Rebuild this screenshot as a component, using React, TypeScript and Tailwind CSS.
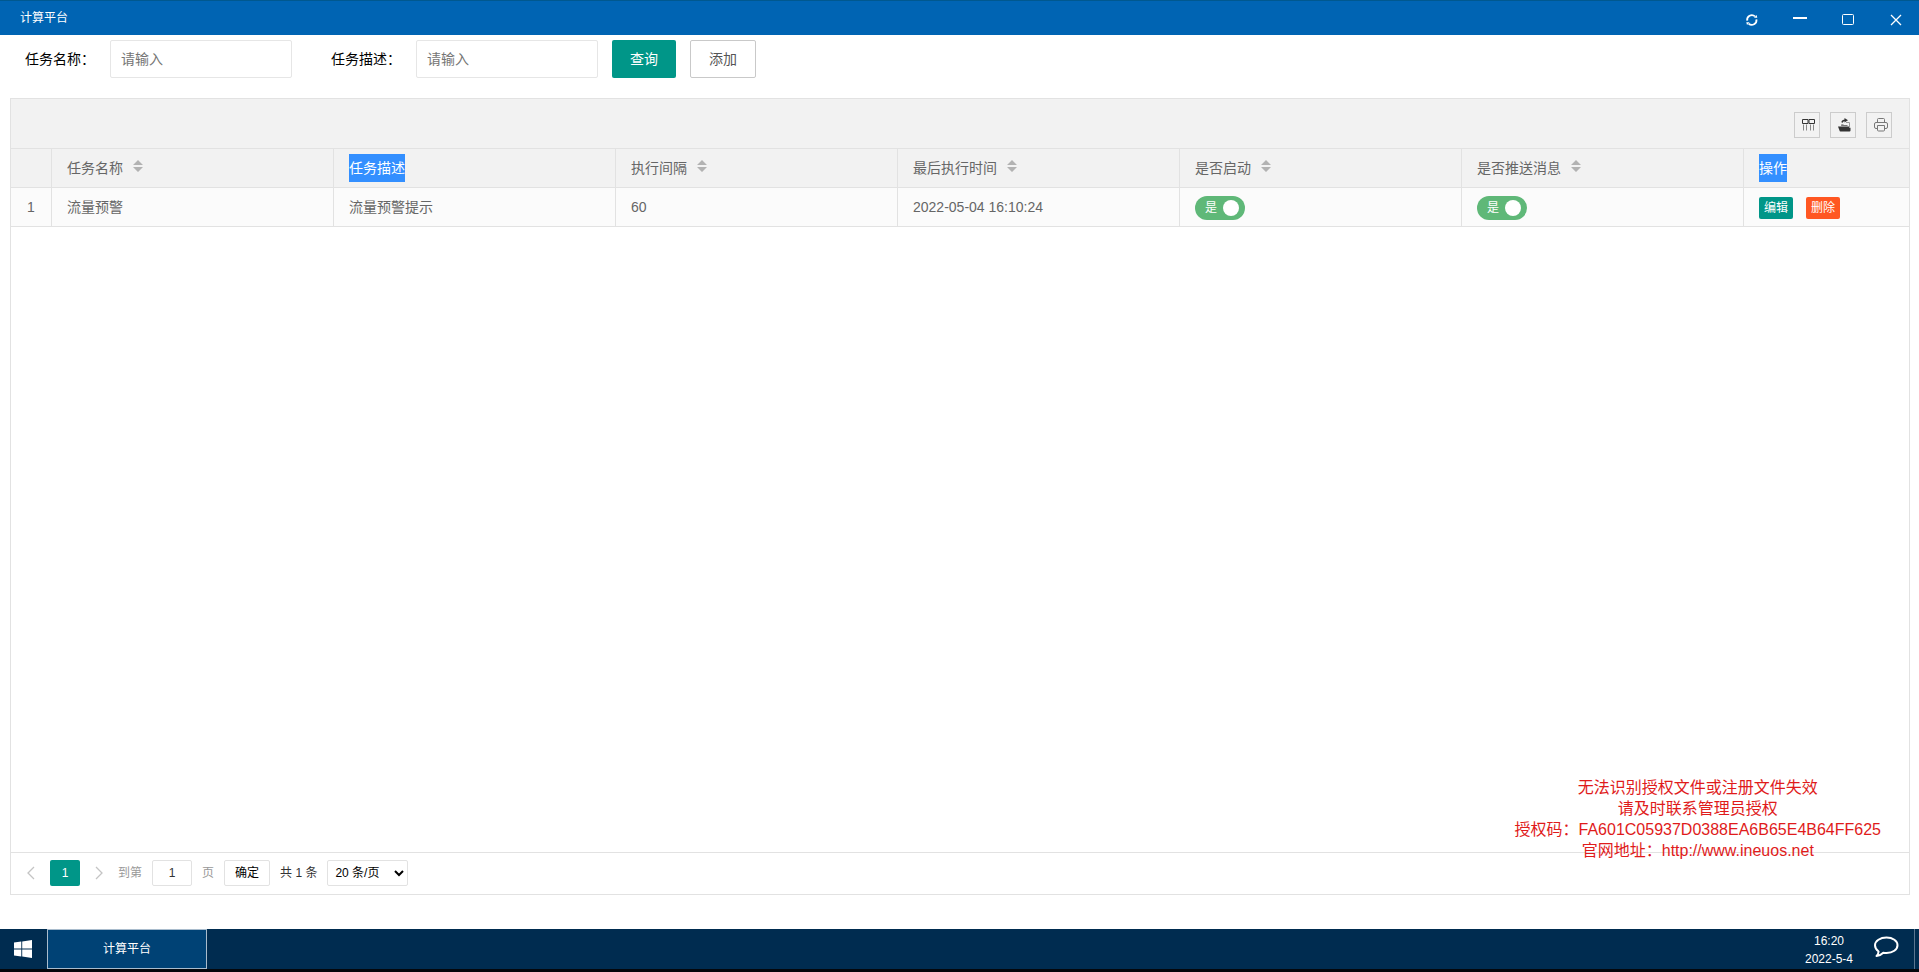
import { useState } from "react";
import type { ReactNode } from "react";

interface Task {
  id: number;
  name: string;
  description: string;
  interval: number;
  lastRun: string;
  enabled: boolean;
  push: boolean;
}

const initialTasks: Task[] = [
  {
    id: 1,
    name: "流量预警",
    description: "流量预警提示",
    interval: 60,
    lastRun: "2022-05-04 16:10:24",
    enabled: true,
    push: true,
  },
];

const columns = [
  { title: "任务名称", sortable: true },
  { title: "任务描述", sortable: false },
  { title: "执行间隔", sortable: true },
  { title: "最后执行时间", sortable: true },
  { title: "是否启动", sortable: true },
  { title: "是否推送消息", sortable: true },
];

const cell = "border-r border-b border-[#e2e2e2] px-[15px]";
const lastCell = "border-b border-[#e2e2e2] px-[15px]";

export default function App() {
  const [tasks, setTasks] = useState(initialTasks);

  const update = (id: number, patch: Partial<Task>) =>
    setTasks((prev) => prev.map((t) => (t.id === id ? { ...t, ...patch } : t)));

  return (
    <div className="relative flex h-screen flex-col bg-white font-['Liberation_Sans','Noto_Sans_CJK_SC',sans-serif] text-sm text-[#666]">
      <TitleBar />
      <SearchForm />

      <main className="mt-5 mr-[9px] mb-[34px] ml-2.5 flex min-h-0 flex-1 flex-col border border-[#e2e2e2]">
        <Toolbar />
        <table className="w-full table-fixed border-separate border-spacing-0 text-left">
          <colgroup>
            <col className="w-[41px]" />
            {columns.map((c) => (
              <col key={c.title} />
            ))}
            <col className="w-[165px]" />
          </colgroup>
          <thead>
            <tr className="h-[39px] bg-[#f2f2f2]">
              <th className="border-r border-b border-[#e2e2e2]" aria-label="序号" />
              {columns.map((c) => (
                <th key={c.title} className={`${cell} font-normal`}>
                  <div className="flex items-center gap-2.5">
                    {c.sortable ? <span>{c.title}</span> : <Selected>{c.title}</Selected>}
                    {c.sortable && <SortButton title={c.title} />}
                  </div>
                </th>
              ))}
              <th className={`${lastCell} font-normal`}>
                <Selected>操作</Selected>
              </th>
            </tr>
          </thead>
          <tbody>
            {tasks.map((t) => (
              <tr key={t.id} className="h-[39px] bg-[#fbfbfb]">
                <td className="border-r border-b border-[#e2e2e2] text-center">{t.id}</td>
                <td className={cell}>{t.name}</td>
                <td className={cell}>{t.description}</td>
                <td className={cell}>{t.interval}</td>
                <td className={cell}>{t.lastRun}</td>
                <td className={cell}>
                  <Toggle
                    label="是否启动"
                    checked={t.enabled}
                    onChange={(v) => update(t.id, { enabled: v })}
                  />
                </td>
                <td className={cell}>
                  <Toggle
                    label="是否推送消息"
                    checked={t.push}
                    onChange={(v) => update(t.id, { push: v })}
                  />
                </td>
                <td className={lastCell}>
                  <div className="flex gap-[13px] pt-0.5 text-xs leading-[22px] text-white">
                    <button className="h-[22px] w-[34px] rounded-xs bg-[#009688]">编辑</button>
                    <button className="h-[22px] w-[34px] rounded-xs bg-[#ff5722]">删除</button>
                  </div>
                </td>
              </tr>
            ))}
          </tbody>
        </table>
        <Pager total={tasks.length} />
      </main>

      <Taskbar />
      <LicenseNotice />
    </div>
  );
}

// ── Window chrome ────────────────────────────────────────────────────────────

function TitleBar() {
  return (
    <header className="flex h-[35px] shrink-0 items-center justify-between border-t border-[#00588f] bg-[#0064b3] pl-5 text-xs text-white">
      <h1>计算平台</h1>
      <div className="flex pt-1">
        <WindowButton label="刷新">
          <path d="M4.200 8.700a4.700 4.700 0 0 1 7.800-4.300M13.400 7.300a4.700 4.700 0 0 1-7.800 4.300" strokeWidth="1.800" />
          <path d="M11 5.800h3.300L13.600 3zM6.600 10.200H3.300L4 13z" fill="currentColor" stroke="none" />
        </WindowButton>
        <WindowButton label="最小化">
          <path d="M2 6h14" strokeWidth="2" />
        </WindowButton>
        <WindowButton label="最大化">
          <rect x="3.500" y="2.500" width="11" height="10" rx="1" />
        </WindowButton>
        <WindowButton label="关闭">
          <path d="M4 3l10 10M14 3l-10 10" strokeWidth="1.300" />
        </WindowButton>
      </div>
    </header>
  );
}

function WindowButton({ label, children }: { label: string; children: ReactNode }) {
  return (
    <button aria-label={label} className="flex w-12 justify-center">
      <svg width="16" height="16" viewBox="0 0 16 16" fill="none" stroke="currentColor">
        {children}
      </svg>
    </button>
  );
}

function Taskbar() {
  return (
    <footer className="flex h-[43px] shrink-0 border-b-3 border-[#04070c] bg-[#002c50] text-xs text-white">
      <button aria-label="开始" className="flex w-[47px] items-center justify-center">
        <svg width="20" height="18" viewBox="0 0 20 18" fill="currentColor">
          <path d="M0 2.600l7.300-1v7H0zM8.200 1.400L18 0v8.600H8.200zM0 9.400h7.300v7L0 15.400zM8.200 9.400H18V18l-9.800-1.400z" />
        </svg>
      </button>
      <button className="w-40 border border-[#a9bccd] bg-[#004275]">计算平台</button>
      <div className="ml-auto flex items-center">
        <time className="pt-0.5 text-center leading-[18px]">
          16:20
          <br />
          2022-5-4
        </time>
        <button aria-label="消息" className="mr-[15px] ml-5 pb-1">
          <svg width="26" height="22" viewBox="0 0 26 22" fill="none" stroke="currentColor" strokeWidth="2">
            <path
              d="M13.500 1.500c6.300 0 11 3.400 11 7.800s-4.700 7.700-11 7.700c-1.100 0-2.200-.1-3.200-.3-1.700 1.700-4 3-6.800 3.300 1.300-1.200 2-2.700 2.100-4.500C3.500 14 2 11.800 2 9.300 2 4.900 7.200 1.500 13.500 1.500z"
              strokeLinejoin="round"
            />
          </svg>
        </button>
        <div className="mr-1 h-10 border-l border-[#5b7690]" />
      </div>
    </footer>
  );
}

// ── Search form ──────────────────────────────────────────────────────────────

function SearchForm() {
  return (
    <form className="mt-[5px] flex h-[38px] shrink-0 items-center gap-3.5 pl-[25px]" onSubmit={(e) => e.preventDefault()}>
      <div className="flex gap-[39px]">
        <SearchField id="task-name" label="任务名称：" />
        <SearchField id="task-desc" label="任务描述：" />
      </div>
      <button className="h-[38px] w-16 rounded-xs bg-[#009688] text-white">查询</button>
      <button type="button" className="h-[38px] w-[66px] rounded-xs border border-[#c9c9c9] text-[#555]">
        添加
      </button>
    </form>
  );
}

function SearchField({ id, label }: { id: string; label: string }) {
  return (
    <div className="flex items-center">
      <label htmlFor={id} className="w-[85px] text-black">
        {label}
      </label>
      <input
        id={id}
        placeholder="请输入"
        className="h-[38px] w-[182px] rounded-xs border border-[#e6e6e6] pl-2.5 placeholder:text-[#757575]"
      />
    </div>
  );
}

// ── Table parts ──────────────────────────────────────────────────────────────

function Toolbar() {
  return (
    <div className="flex h-[50px] shrink-0 items-center justify-end gap-2.5 border-b border-[#e2e2e2] bg-[#f2f2f2] pt-0.5 pr-[17px] text-[#333]">
      <ToolButton label="筛选列">
        <path d="M1.500 2.500h5.500v4H1.500zM8 2.500h5.500v4H8z" />
        <path d="M2.500 7.500v6M5.500 7.500v6M9.500 7.500v6M12.500 7.500v6" stroke="#888" />
      </ToolButton>
      <ToolButton label="导出">
        <path d="M1 9.500h11l1.500 1.500v2.500a1 1 0 0 1-1 1h-9a1 1 0 0 1-1-1z" fill="currentColor" stroke="none" />
        <path d="M4.500 9V7.500h2M9 5.500h3.500V11" stroke="#999" />
        <path d="M4.500 8.500h6" stroke="#777" />
        <path d="M5 5.500c.3-1.600 1.400-2.300 3.200-2.300" strokeWidth="1.400" />
        <path d="M7.500 1L11 3.200 7.500 5.400z" fill="currentColor" stroke="none" />
      </ToolButton>
      <ToolButton label="打印">
        <g stroke="#777">
          <path d="M4.500 5.500v-3a1 1 0 0 1 1-1h5a1 1 0 0 1 1 1v3" />
          <path d="M4 11.500H3A1.500 1.500 0 0 1 1.500 10V7A1.500 1.500 0 0 1 3 5.500h10A1.500 1.500 0 0 1 14.500 7v3a1.500 1.500 0 0 1-1.500 1.500h-1" />
          <path d="M4.500 8.500h7V13a1 1 0 0 1-1 1h-5a1 1 0 0 1-1-1z" />
        </g>
      </ToolButton>
    </div>
  );
}

function ToolButton({ label, children }: { label: string; children: ReactNode }) {
  return (
    <button aria-label={label} className="flex size-[26px] items-center justify-end border border-[#ccc] pr-0.5">
      <svg width="16" height="16" viewBox="0 0 16 16" fill="none" stroke="currentColor">
        {children}
      </svg>
    </button>
  );
}

function Selected({ children }: { children: ReactNode }) {
  return <span className="inline-block bg-[#338fff] align-middle leading-7 text-white">{children}</span>;
}

function SortButton({ title }: { title: string }) {
  return (
    <button aria-label={`${title}排序`} className="pb-1">
      <svg width="10" height="12" viewBox="0 0 10 12" fill="#b2b2b2">
        <path d="M5 0l5 5H0zM0 7h10l-5 5z" />
      </svg>
    </button>
  );
}

interface ToggleProps {
  label: string;
  checked: boolean;
  onChange: (value: boolean) => void;
}

function Toggle({ label, checked, onChange }: ToggleProps) {
  return (
    <div className="pt-0.5">
      <label
        className={`flex h-6 w-[50px] items-center justify-between rounded-full pr-1.5 pl-2.5 text-xs text-white ${
          checked ? "bg-[#5fb878]" : "flex-row-reverse bg-[#d2d2d2]"
        }`}
      >
        <input
          type="checkbox"
          aria-label={label}
          checked={checked}
          onChange={(e) => onChange(e.target.checked)}
          className="sr-only"
        />
        {checked ? "是" : "否"}
        <span className="size-4 rounded-full bg-white" />
      </label>
    </div>
  );
}

function Pager({ total }: { total: number }) {
  return (
    <nav className="mt-auto flex h-[42px] shrink-0 items-center border-t border-[#e2e2e2] pt-[7px] pb-2 pl-1.5 text-xs text-[#333]">
      <button aria-label="上一页" disabled className="mr-[5px] flex w-7 justify-center">
        <Chevron d="M7 1L1 7l6 6" />
      </button>
      <button className="h-[26px] w-[30px] rounded-xs bg-[#009688] text-white">1</button>
      <button aria-label="下一页" disabled className="flex w-[38px] justify-center">
        <Chevron d="M1 1l6 6-6 6" />
      </button>
      <div className="flex items-center gap-2.5">
        <label htmlFor="page" className="text-[#999]">
          到第
        </label>
        <input
          id="page"
          defaultValue="1"
          className="h-[26px] w-10 rounded-xs border border-[#e2e2e2] text-center"
        />
        <span className="text-[#999]">页</span>
        <button className="h-[26px] w-[46px] rounded-xs border border-[#e2e2e2] text-black">确定</button>
        <span>共 {total} 条</span>
        <select
          aria-label="每页条数"
          defaultValue="20"
          className="h-[26px] w-[81px] rounded-xs border border-[#e2e2e2] bg-white pl-[3px] text-black"
        >
          <option value="10">10 条/页</option>
          <option value="20">20 条/页</option>
          <option value="50">50 条/页</option>
        </select>
      </div>
    </nav>
  );
}

function Chevron({ d }: { d: string }) {
  return (
    <svg width="8" height="14" viewBox="0 0 8 14" fill="none" stroke="#c4c4c4" strokeWidth="1.3">
      <path d={d} />
    </svg>
  );
}

function LicenseNotice() {
  return (
    <div className="absolute right-[38px] bottom-[111px] text-center text-base leading-[21px] text-[#e01b1b]">
      <p>无法识别授权文件或注册文件失效</p>
      <p>请及时联系管理员授权</p>
      <p>授权码：FA601C05937D0388EA6B65E4B64FF625</p>
      <p>
        官网地址：<a href="http://www.ineuos.net">http://www.ineuos.net</a>
      </p>
    </div>
  );
}
